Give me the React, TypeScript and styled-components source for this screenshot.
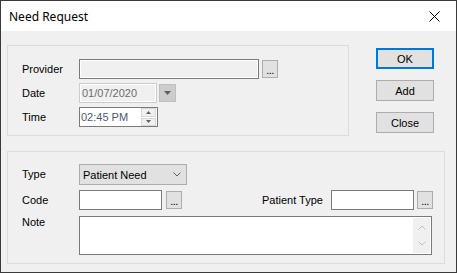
import React from "react";
import styled, { createGlobalStyle } from "styled-components";

const GlobalStyle = createGlobalStyle`
  html, body { margin: 0; padding: 0; background: #ffffff; }
  body { font-family: "Liberation Sans", Arial, sans-serif; font-size: 11px; color: #000; }
  * { box-sizing: border-box; }
`;

const Window = styled.div`
  width: 457px;
  height: 273px;
  border: 1px solid #3a3a3a;
  background: #f0f0f0;
  display: flex;
  flex-direction: column;
  overflow: hidden;
`;

const TitleBar = styled.div`
  height: 30px;
  flex: none;
  background: #ffffff;
  display: flex;
  align-items: center;
  padding-left: 8px;
  font-family: "Noto Sans", "Open Sans", sans-serif;
  font-size: 12px;
  color: #000;
`;

const TitleText = styled.span`
  flex: 1;
  padding-top: 1px;
`;

const CloseX = styled.div`
  width: 46px;
  height: 30px;
  display: flex;
  align-items: center;
  justify-content: center;
  margin-right: -1px;
`;

const Body = styled.div`
  flex: 1;
  padding: 14px 0 0 6px;
  display: flex;
  flex-direction: column;
`;

const TopRow = styled.div`
  display: flex;
  align-items: flex-start;
`;

const Group = styled.div<{ $w: number; $h: number; $pt: number; $gap: number }>`
  width: ${(p) => p.$w}px;
  height: ${(p) => p.$h}px;
  border: 1px solid #dcdcdc;
  padding: ${(p) => p.$pt}px 11px 0 14px;
  display: flex;
  flex-direction: column;
  gap: ${(p) => p.$gap}px;
`;

const Row = styled.div<{ $h: number; $top?: boolean }>`
  height: ${(p) => p.$h}px;
  display: flex;
  align-items: ${(p) => (p.$top ? "flex-start" : "center")};
`;

const Label = styled.div<{ $w?: number; $top?: boolean }>`
  width: ${(p) => (p.$w ? `${p.$w}px` : "57px")};
  flex: none;
  padding-top: ${(p) => (p.$top ? "0px" : "0")};
  line-height: ${(p) => (p.$top ? "13px" : "normal")};
`;

const TextBox = styled.div<{ $w: number; $h?: number; $variant?: "readonly" | "disabled" | "normal" }>`
  width: ${(p) => p.$w}px;
  height: ${(p) => p.$h ?? 20}px;
  flex: none;
  border: 1px solid ${(p) => (p.$variant === "disabled" ? "#cccccc" : "#7a7a7a")};
  background: ${(p) => (p.$variant === "normal" || !p.$variant ? "#ffffff" : "#f0f0f0")};
  box-shadow: ${(p) => (p.$variant && p.$variant !== "normal" ? "inset 0 0 0 1px #ffffff" : "none")};
  display: flex;
  align-items: center;
  position: relative;
`;

const FieldText = styled.span<{ $color: string; $pl: number }>`
  color: ${(p) => p.$color};
  padding-left: ${(p) => p.$pl}px;
  flex: 1;
`;

const DotsButton = styled.div<{ $ml: number }>`
  width: 16px;
  height: 18px;
  margin-left: ${(p) => p.$ml}px;
  flex: none;
  background: #e1e1e1;
  border: 1px solid #adadad;
  display: flex;
  align-items: flex-end;
  justify-content: center;
  font-size: 11px;
  line-height: 14px;
  letter-spacing: -0.5px;
`;

const DropButton = styled.div`
  width: 17px;
  height: 18px;
  margin-left: 2px;
  flex: none;
  background: #cccccc;
  border: 1px solid #bfbfbf;
  display: flex;
  align-items: center;
  justify-content: center;
`;

const Spinner = styled.div`
  width: 15px;
  height: 18px;
  margin-left: auto;
  margin-right: 1px;
  display: flex;
  flex-direction: column;
  gap: 1px;
`;

const SpinHalf = styled.div`
  flex: 1;
  background: #f0f0f0;
  border: 1px solid #d9d9d9;
  display: flex;
  align-items: center;
  justify-content: center;
`;

const ButtonCol = styled.div`
  margin-left: 27px;
  margin-top: 3px;
  display: flex;
  flex-direction: column;
  gap: 11px;
`;

const Button = styled.div<{ $default?: boolean }>`
  width: 58px;
  height: 21px;
  background: #e1e1e1;
  border: ${(p) => (p.$default ? "2px solid #0078d7" : "1px solid #adadad")};
  display: flex;
  align-items: center;
  justify-content: center;
  font-size: 11px;
`;

const Combo = styled.div`
  width: 108px;
  height: 21px;
  background: #e1e1e1;
  border: 1px solid #adadad;
  display: flex;
  align-items: center;
  padding: 0 5px 0 3px;
  margin-top: 1px;
`;

const ComboText = styled.span`
  flex: 1;
`;

const Spacer = styled.div`
  flex: 1;
`;

const NoteArea = styled.div`
  width: 353px;
  height: 39px;
  background: #ffffff;
  border: 1px solid #7a7a7a;
  display: flex;
  justify-content: flex-end;
  padding: 1px;
`;

const ScrollTrack = styled.div`
  width: 17px;
  background: #f0f0f0;
  display: flex;
  flex-direction: column;
  justify-content: space-between;
  align-items: center;
  padding: 7px 0 7px;
`;

const Group2Spacer = styled.div`
  height: 15px;
  flex: none;
`;

const Chevron = ({ up, color }: { up?: boolean; color: string }) => (
  <svg width="8" height="5" viewBox="0 0 8 5">
    <path d={up ? "M0.5 4.5 L4 1 L7.5 4.5" : "M0.5 0.5 L4 4 L7.5 0.5"} fill="none" stroke={color} strokeWidth="1" />
  </svg>
);

const Tri = ({ up, w }: { up?: boolean; w: number }) => (
  <svg width={w} height={Math.ceil(w / 2)} viewBox={`0 0 ${w} ${Math.ceil(w / 2)}`}>
    <path
      d={up ? `M0 ${Math.ceil(w / 2)} L${w / 2} 0 L${w} ${Math.ceil(w / 2)} Z` : `M0 0 L${w} 0 L${w / 2} ${Math.ceil(w / 2)} Z`}
      fill="#606060"
    />
  </svg>
);

export default function App() {
  return (
    <>
      <GlobalStyle />
      <Window>
        <TitleBar>
          <TitleText>Need Request</TitleText>
          <CloseX>
            <svg width="11" height="11" viewBox="0 0 11 11">
              <path d="M0.5 0.5 L10.5 10.5 M10.5 0.5 L0.5 10.5" stroke="#000" strokeWidth="1" />
            </svg>
          </CloseX>
        </TitleBar>
        <Body>
          <TopRow>
            <Group $w={342} $h={91} $pt={13} $gap={4}>
              <Row $h={20}>
                <Label>Provider</Label>
                <TextBox $w={180} $variant="readonly" />
                <DotsButton $ml={3}>...</DotsButton>
              </Row>
              <Row $h={20}>
                <Label>Date</Label>
                <TextBox $w={78} $variant="disabled">
                  <FieldText $color="#6d6d6d" $pl={2}>01/07/2020</FieldText>
                </TextBox>
                <DropButton>
                  <Tri w={7} />
                </DropButton>
              </Row>
              <Row $h={20}>
                <Label>Time</Label>
                <TextBox $w={79} $variant="normal">
                  <FieldText $color="#4b5a70" $pl={1}>02:45 PM</FieldText>
                  <Spinner>
                    <SpinHalf>
                      <Tri up w={5} />
                    </SpinHalf>
                    <SpinHalf>
                      <Tri w={5} />
                    </SpinHalf>
                  </Spinner>
                </TextBox>
              </Row>
            </Group>
            <ButtonCol>
              <Button $default>OK</Button>
              <Button>Add</Button>
              <Button>Close</Button>
            </ButtonCol>
          </TopRow>
          <Group2Spacer />
          <Group $w={438} $h={113} $pt={12} $gap={6}>
            <Row $h={20}>
              <Label>Type</Label>
              <Combo>
                <ComboText>Patient Need</ComboText>
                <Chevron color="#606060" />
              </Combo>
            </Row>
            <Row $h={20}>
              <Label>Code</Label>
              <TextBox $w={83} $variant="normal" />
              <DotsButton $ml={4}>...</DotsButton>
              <Spacer />
              <Label $w={69}>Patient Type</Label>
              <TextBox $w={83} $variant="normal" />
              <DotsButton $ml={3}>...</DotsButton>
            </Row>
            <Row $h={39} $top>
              <Label $top>Note</Label>
              <NoteArea>
                <ScrollTrack>
                  <Chevron up color="#c0c0c0" />
                  <Chevron color="#c0c0c0" />
                </ScrollTrack>
              </NoteArea>
            </Row>
          </Group>
        </Body>
      </Window>
    </>
  );
}
